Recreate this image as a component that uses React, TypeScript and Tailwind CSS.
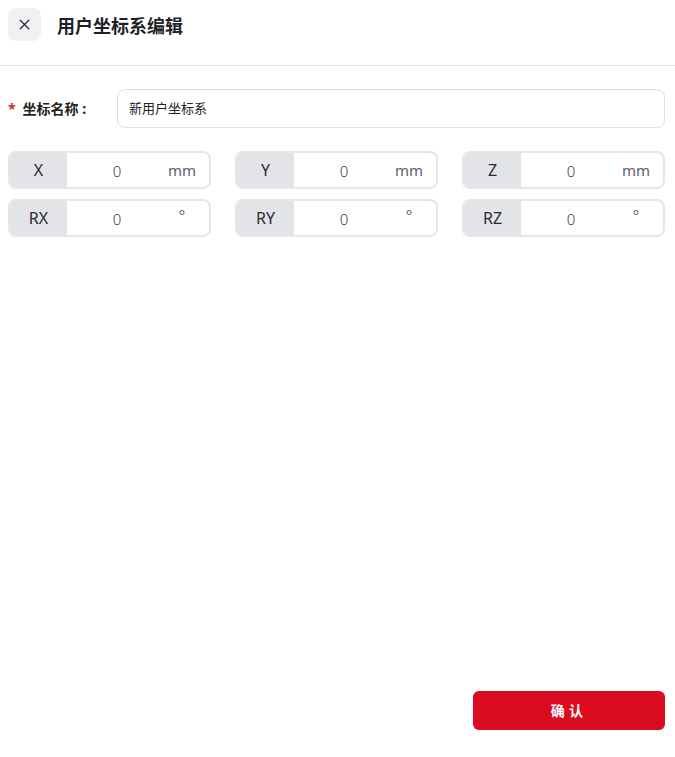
import { X } from 'lucide-react';

const fields = [
  { label: 'X', unit: 'mm' },
  { label: 'Y', unit: 'mm' },
  { label: 'Z', unit: 'mm' },
  { label: 'RX', unit: '°' },
  { label: 'RY', unit: '°' },
  { label: 'RZ', unit: '°' },
];

function CoordField({ label, unit }: { label: string; unit: string }) {
  return (
    <div className="flex h-[38px] overflow-hidden rounded-lg border-2 border-[#e6e6e8] bg-white">
      <div className="flex w-[57px] items-center justify-center bg-[#e3e4e8] text-[16px] text-[#2b2b33]">
        {label}
      </div>
      <div className="flex w-[100px] items-center justify-center pt-[2px] text-[15px] font-light text-[#3a3a3a]">0</div>
      <div
        className={
          unit === 'mm'
            ? 'flex flex-1 items-center justify-center pr-3 text-[15px] text-[#5b6070]'
            : 'flex flex-1 items-start justify-center pr-3 pt-[3px] text-[15px] text-[#5b6070]'
        }
      >
        {unit}
      </div>
    </div>
  );
}

export default function App() {
  return (
    <div
      className="flex h-[757px] w-full flex-col bg-white"
      style={{ fontFamily: '"Noto Sans", "Noto Sans CJK SC", sans-serif' }}
    >
      <div className="flex h-[66px] items-start gap-[16px] border-b border-[#e2e2e2] pl-2 pr-[10px] pt-[8px]">
        <button className="flex h-[33px] w-[33px] items-center justify-center rounded-lg bg-[#f1f1f1] text-[#23233a]">
          <X className="h-[17px] w-[17px]" strokeWidth={1.7} />
        </button>
        <h1 className="mt-[2px] h-[33px] text-[18px] font-bold leading-[33px] text-[#1f1f28]">用户坐标系编辑</h1>
      </div>

      <div className="flex flex-1 flex-col pl-2 pr-[10px] pt-[23px]">
        <div className="flex items-center">
          <div className="flex w-[109px] items-center text-[14px] font-bold text-[#222]">
            <span className="mr-[7px] text-[#c0392b]">*</span>
            坐标名称&nbsp;:
          </div>
          <div className="flex h-[39px] flex-1 items-center rounded-lg border border-[#dedfe2] px-[11px] text-[13px] text-[#222]">
            新用户坐标系
          </div>
        </div>

        <div className="mt-[23px] grid grid-cols-3 gap-x-6 gap-y-[10px]">
          {fields.map((f) => (
            <CoordField key={f.label} label={f.label} unit={f.unit} />
          ))}
        </div>

        <div className="flex flex-1 items-end justify-end pb-[27px]">
          <button className="h-[39px] w-[192px] rounded-md bg-[#d90d1f] text-[14px] font-bold tracking-[0.3em] text-white">
            确认
          </button>
        </div>
      </div>
    </div>
  );
}
